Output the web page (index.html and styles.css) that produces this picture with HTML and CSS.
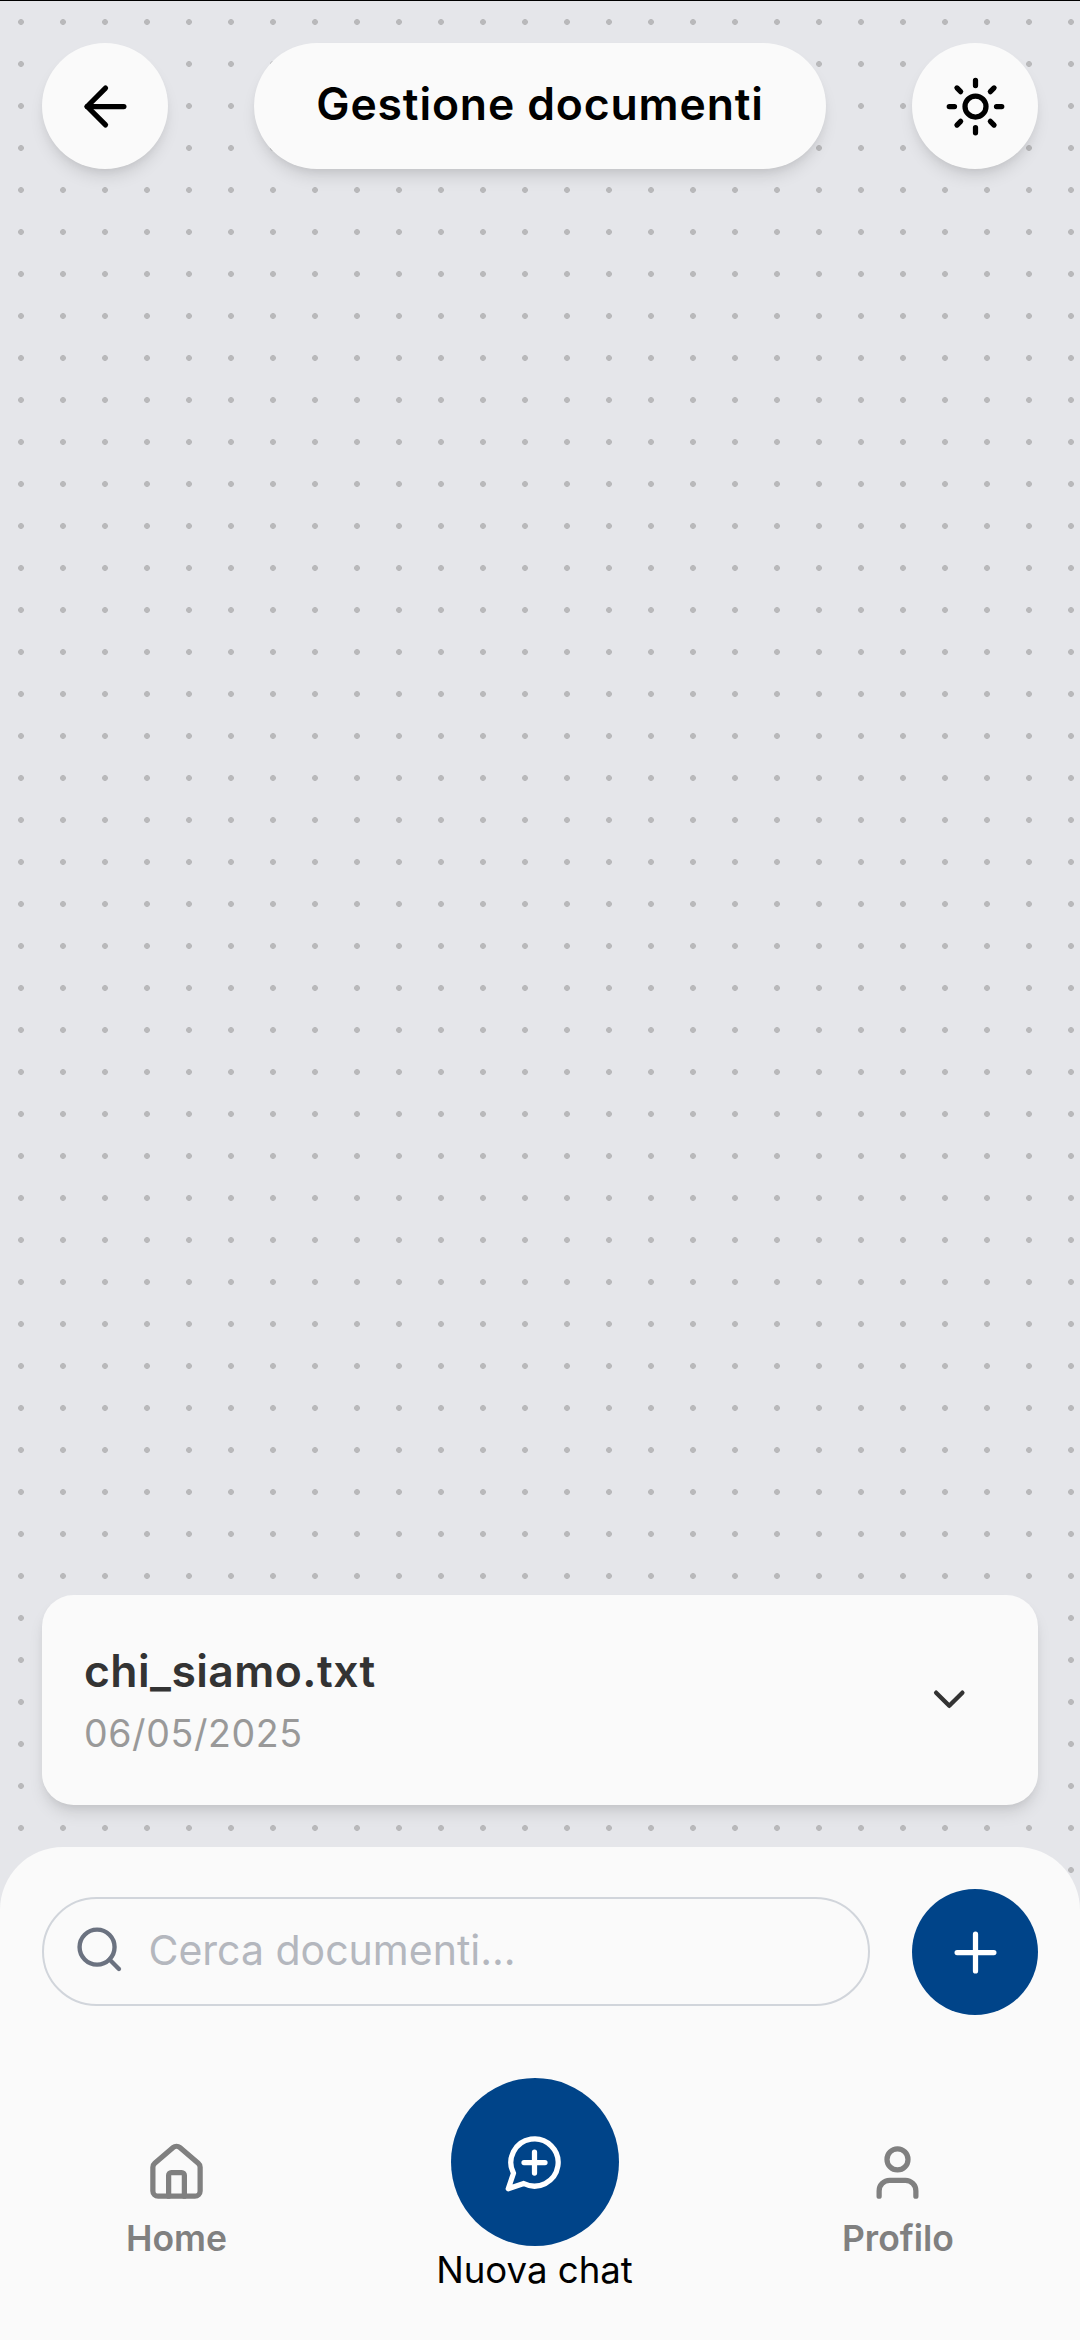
FILE: index.html
```
<!DOCTYPE html>
<html lang="it">
<head>
<meta charset="utf-8">
<title>Gestione documenti</title>
<link rel="stylesheet" href="styles.css">
</head>
<body>
<div class="screen">
  <header class="topbar">
    <button class="round-btn" aria-label="Indietro">
      <svg class="icon" viewBox="0 0 24 24"><path d="m12 19-7-7 7-7"/><path d="M19 12H5"/></svg>
    </button>
    <h1 class="title">Gestione documenti</h1>
    <button class="round-btn" aria-label="Tema">
      <svg class="icon" viewBox="0 0 24 24"><circle cx="12" cy="12" r="4"/><path d="M12 2v2M12 20v2M4.93 4.93l1.41 1.41M17.66 17.66l1.41 1.41M2 12h2M20 12h2M6.34 17.66l-1.41 1.41M19.07 4.93l-1.41 1.41"/></svg>
    </button>
  </header>

  <main class="documents">
    <article class="card">
      <div class="card-text">
        <h2 class="card-name">chi_siamo.txt</h2>
        <p class="card-date">06/05/2025</p>
      </div>
      <button class="card-toggle" aria-label="Espandi">
        <svg class="icon icon-small" viewBox="0 0 24 24"><path d="m6 9 6 6 6-6"/></svg>
      </button>
    </article>
  </main>

  <footer class="panel">
    <div class="search-row">
      <div class="search">
        <svg class="icon icon-small" viewBox="0 0 24 24"><circle cx="11" cy="11" r="8"/><path d="m21 21-4.3-4.3"/></svg>
        <span class="placeholder">Cerca documenti...</span>
      </div>
      <button class="add-btn" aria-label="Aggiungi">
        <svg class="icon" viewBox="0 0 24 24"><path d="M5 12h14M12 5v14"/></svg>
      </button>
    </div>
    <nav class="nav">
      <a class="nav-item">
        <svg class="icon" viewBox="0 0 24 24"><path d="M15 21v-8a1 1 0 0 0-1-1h-4a1 1 0 0 0-1 1v8"/><path d="M3 10a2 2 0 0 1 .709-1.528l7-5.999a2 2 0 0 1 2.582 0l7 5.999A2 2 0 0 1 21 10v9a2 2 0 0 1-2 2H5a2 2 0 0 1-2-2z"/></svg>
        <span class="nav-label">Home</span>
      </a>
      <a class="nav-main">
        <span class="nav-circle">
          <svg class="icon" viewBox="0 0 24 24"><path d="M7.9 20A9 9 0 1 0 4 16.1L2 22Z"/><path d="M8 12h8M12 8v8"/></svg>
        </span>
        <span class="nav-main-label">Nuova chat</span>
      </a>
      <a class="nav-item">
        <svg class="icon" viewBox="0 0 24 24"><path d="M19 21v-2a4 4 0 0 0-4-4H9a4 4 0 0 0-4 4v2"/><circle cx="12" cy="7" r="4"/></svg>
        <span class="nav-label">Profilo</span>
      </a>
    </nav>
  </footer>
</div>
</body>
</html>
```
FILE: styles.css
```
* {
  box-sizing: border-box;
  margin: 0;
  padding: 0;
}

body {
  font-family: Inter, "Liberation Sans", sans-serif;
  background: #fafafa;
}

button {
  border: 0;
  background: none;
  font: inherit;
}

.screen {
  display: flex;
  flex-direction: column;
  width: 1080px;
  height: 2340px;
  overflow: hidden;
  border-top: 1px solid #000;
  background-color: #e5e6ea;
  background-image: radial-gradient(circle, #b9b9bb 2.6px, transparent 3.2px);
  background-size: 42px 42px;
}

.icon {
  display: block;
  flex: none;
  width: 63px;
  height: 63px;
  fill: none;
  stroke: currentColor;
  stroke-width: 2;
  stroke-linecap: round;
  stroke-linejoin: round;
}

.icon-small {
  width: 52.5px;
  height: 52.5px;
}

.topbar {
  display: flex;
  justify-content: space-between;
  padding: 42px;
}

.round-btn,
.title,
.card {
  background: #fafafa;
  box-shadow: 0 10.5px 15.75px -2.6px rgba(0, 0, 0, .1), 0 5.25px 10.5px -5.25px rgba(0, 0, 0, .1);
}

.round-btn {
  display: flex;
  align-items: center;
  justify-content: center;
  width: 126px;
  height: 126px;
  border-radius: 50%;
  color: #000;
}

.title {
  width: 572px;
  height: 126px;
  border-radius: 63px;
  text-align: center;
  font-size: 44.5px;
  font-weight: 600;
  letter-spacing: .85px;
  line-height: 122px;
  color: #000;
}

.documents {
  flex: 1;
  display: flex;
  flex-direction: column;
  justify-content: flex-end;
  padding: 0 42px 42px;
}

.card {
  display: flex;
  align-items: center;
  justify-content: space-between;
  height: 210px;
  padding: 42px;
  border-radius: 31.5px;
}

.card-text {
  height: 126px;
}

.card-name {
  font-size: 44.5px;
  font-weight: 600;
  letter-spacing: .43px;
  line-height: 69px;
  color: #333;
}

.card-date {
  font-size: 37.5px;
  letter-spacing: .6px;
  line-height: 56px;
  color: #999;
}

.card-toggle {
  padding: 0 21px 2px;
  color: #333;
}

.panel {
  height: 493px;
  padding: 42px;
  border-radius: 63px 63px 0 0;
  background: #fafafa;
}

.search-row {
  display: flex;
  align-items: center;
  gap: 42px;
}

.search {
  flex: 1;
  display: flex;
  align-items: center;
  gap: 23px;
  height: 109px;
  margin-bottom: 1px;
  padding: 0 29px 4px;
  border: 2px solid #d1d5db;
  border-radius: 55px;
  color: #6b7280;
}

.placeholder {
  font-size: 41px;
  line-height: 62px;
  color: #b4b7be;
}

.add-btn {
  display: flex;
  align-items: center;
  justify-content: center;
  width: 126px;
  height: 126px;
  border-radius: 50%;
  background: #004489;
  color: #fff;
}

.nav {
  display: flex;
  justify-content: space-between;
  align-items: flex-start;
  padding: 63px 84px 0;
}

.nav-item {
  display: flex;
  flex-direction: column;
  align-items: center;
  gap: 8px;
  padding-top: 63px;
  color: #808080;
}

.nav-label {
  font-size: 35.5px;
  font-weight: 600;
  line-height: 54px;
}

.nav-main {
  display: flex;
  flex-direction: column;
  align-items: center;
}

.nav-circle {
  display: flex;
  align-items: center;
  justify-content: center;
  width: 168px;
  height: 168px;
  border-radius: 50%;
  background: #004489;
  color: #fff;
}

.nav-main-label {
  font-size: 36.6px;
  line-height: 49px;
  color: #000;
}
```
